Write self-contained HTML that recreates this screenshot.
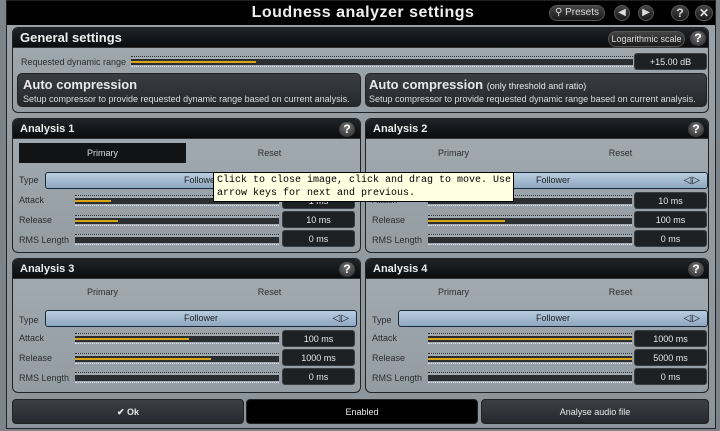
<!DOCTYPE html>
<html><head><meta charset="utf-8"><style>
*{margin:0;padding:0;box-sizing:border-box}
body{width:720px;height:431px;background:#7c8389;position:relative;overflow:hidden;font-family:"Liberation Sans",sans-serif;color:#e8e8e8}
.abs{position:absolute}
.win{left:6px;top:0;width:710px;height:429px;border:1px solid #222;background:linear-gradient(#9aa2a9,#8b949b)}
.title{left:0;top:0;width:708px;height:24px;background:#000;}
.title .t{position:absolute;left:0;width:712px;text-align:center;top:3px;font-size:16px;font-weight:bold;color:#f0f0f0;letter-spacing:.5px}
.pbtn{background:linear-gradient(#444,#1a1a1a);border-radius:9px;border:1px solid #555;color:#ddd;font-size:10px;text-align:center;line-height:14px;height:16px}
.panel{border:1px solid #222;border-radius:6px;background:linear-gradient(#a3abb2,#939ca3);overflow:hidden}
.hdr{left:0;top:0;width:100%;height:20px;background:linear-gradient(#202428,#0a0c0e);border-bottom:1px solid #333}
.hdr span{position:absolute;left:7px;top:4px;font-size:11px;font-weight:bold;color:#eee}
.q{width:16px;height:15px;border-radius:8px;background:radial-gradient(circle at 50% 35%,#777,#222);color:#fff;font-weight:bold;font-size:12px;text-align:center;line-height:15px}
.lbl{font-size:9px;color:#2a2d30}
.tab{font-size:9px;color:#2a2d30;text-align:center;line-height:20px;height:20px}
.track{height:11px;border-top:1px dotted #333;border-bottom:1px dotted #dde;background:linear-gradient(#a3abb2 0 2px,#2a2e31 2px 8px,#a3abb2 8px)}
.fill{position:absolute;left:0;top:4px;height:2px;background:#d9a514}
.val{background:#1e2124;border-radius:3px;color:#e8e8e8;font-size:9px;text-align:center;line-height:17px;height:17px;border:1px solid #3a3e41}
.typebox{height:17px;border:1px solid #1a2a3a;border-radius:3px;background:linear-gradient(#b9cde0,#8ea8c0);color:#222;font-size:9px;text-align:center;line-height:15px}
.arr{position:absolute;right:6px;top:0;font-size:10px;color:#111;letter-spacing:1px}
.btm{height:25px;border-radius:4px;font-size:9px;text-align:center;line-height:25px;border:1px solid #222}
</style></head><body>
<div class="abs win">
 <div class="abs title"><div class="t">Loudness analyzer settings</div>
  <div class="abs pbtn" style="left:542px;top:4px;width:56px">&#9906; Presets</div>
  <div class="abs pbtn" style="left:607px;top:4px;width:16px">&#9664;</div>
  <div class="abs pbtn" style="left:631px;top:4px;width:16px">&#9654;</div>
  <div class="abs pbtn" style="left:664px;top:4px;width:18px;font-weight:bold;font-size:12px">?</div>
  <div class="abs pbtn" style="left:688px;top:4px;width:18px;font-weight:bold;font-size:12px">✕</div>
 </div>
</div>
<div class="abs panel" style="left:12px;top:27px;width:697px;height:86px">
 <div class="abs hdr"><span style="font-size:13px;top:2px">General settings</span></div>
 <div class="abs pbtn" style="left:595px;top:3px;width:77px;font-size:9px">Logarithmic scale</div>
 <div class="abs q" style="left:677px;top:3px">?</div>
 <div class="abs lbl" style="left:8px;top:29px">Requested dynamic range</div>
 <div class="abs track" style="left:118px;top:28px;width:502px"><div class="fill" style="width:125px"></div></div>
 <div class="abs val" style="left:621px;top:25px;width:73px">+15.00 dB</div>
 <div class="abs" style="left:4px;top:45px;width:344px;height:34px;background:linear-gradient(#3a3e42,#25282b);border-radius:5px;border:1px solid #222">
  <div class="abs" style="left:5px;top:3px;font-size:13px;font-weight:bold">Auto compression</div>
  <div class="abs" style="left:5px;top:20px;font-size:9px;color:#ddd">Setup compressor to provide requested dynamic range based on current analysis.</div></div>
 <div class="abs" style="left:352px;top:45px;width:342px;height:34px;background:linear-gradient(#3a3e42,#25282b);border-radius:5px;border:1px solid #222">
  <div class="abs" style="left:3px;top:3px;font-size:13px;font-weight:bold;white-space:nowrap">Auto compression <span style="font-size:9px;font-weight:normal">(only threshold and ratio)</span></div>
  <div class="abs" style="left:3px;top:20px;font-size:9px;color:#ddd">Setup compressor to provide requested dynamic range based on current analysis.</div></div>
</div>

<div class="abs panel" style="left:12px;top:118px;width:349px;height:135px">
 <div class="abs hdr"><span>Analysis 1</span></div><div class="abs q" style="left:326px;top:3px">?</div>
 <div class="abs tab" style="left:6px;top:24px;width:167px;background:#121314;color:#ddd">Primary</div>
 <div class="abs tab" style="left:173px;top:24px;width:167px">Reset</div>
 <div class="abs lbl" style="left:6px;top:56px">Type</div>
 <div class="abs typebox" style="left:32px;top:53px;width:312px">Follower<span class="arr">◁▷</span></div>
 <div class="abs lbl" style="left:6px;top:76px">Attack</div><div class="abs track" style="left:62px;top:76px;width:204px"><div class="fill" style="width:36px"></div></div><div class="abs val" style="left:269px;top:73px;width:73px">1 ms</div>
 <div class="abs lbl" style="left:6px;top:96px">Release</div><div class="abs track" style="left:62px;top:96px;width:204px"><div class="fill" style="width:43px"></div></div><div class="abs val" style="left:269px;top:92px;width:73px">10 ms</div>
 <div class="abs lbl" style="left:6px;top:116px">RMS Length</div><div class="abs track" style="left:62px;top:115px;width:204px"></div><div class="abs val" style="left:269px;top:111px;width:73px">0 ms</div>
</div>
<div class="abs panel" style="left:365px;top:118px;width:344px;height:135px">
 <div class="abs hdr"><span>Analysis 2</span></div><div class="abs q" style="left:322px;top:3px">?</div>
 <div class="abs tab" style="left:4px;top:24px;width:167px">Primary</div>
 <div class="abs tab" style="left:171px;top:24px;width:167px">Reset</div>
 <div class="abs lbl" style="left:6px;top:56px">Type</div>
 <div class="abs typebox" style="left:32px;top:53px;width:310px">Follower<span class="arr">◁▷</span></div>
 <div class="abs lbl" style="left:6px;top:76px">Attack</div><div class="abs track" style="left:62px;top:76px;width:204px"><div class="fill" style="width:60px"></div></div><div class="abs val" style="left:268px;top:73px;width:73px">10 ms</div>
 <div class="abs lbl" style="left:6px;top:96px">Release</div><div class="abs track" style="left:62px;top:96px;width:204px"><div class="fill" style="width:77px"></div></div><div class="abs val" style="left:268px;top:92px;width:73px">100 ms</div>
 <div class="abs lbl" style="left:6px;top:116px">RMS Length</div><div class="abs track" style="left:62px;top:115px;width:204px"></div><div class="abs val" style="left:268px;top:111px;width:73px">0 ms</div>
</div>
<div class="abs panel" style="left:12px;top:258px;width:349px;height:135px">
 <div class="abs hdr"><span>Analysis 3</span></div><div class="abs q" style="left:326px;top:3px">?</div>
 <div class="abs tab" style="left:6px;top:23px;width:167px">Primary</div>
 <div class="abs tab" style="left:173px;top:23px;width:167px">Reset</div>
 <div class="abs lbl" style="left:6px;top:56px">Type</div>
 <div class="abs typebox" style="left:32px;top:51px;width:312px">Follower<span class="arr">◁▷</span></div>
 <div class="abs lbl" style="left:6px;top:74px">Attack</div><div class="abs track" style="left:62px;top:74px;width:204px"><div class="fill" style="width:114px"></div></div><div class="abs val" style="left:269px;top:71px;width:73px">100 ms</div>
 <div class="abs lbl" style="left:6px;top:94px">Release</div><div class="abs track" style="left:62px;top:94px;width:204px"><div class="fill" style="width:136px"></div></div><div class="abs val" style="left:269px;top:90px;width:73px">1000 ms</div>
 <div class="abs lbl" style="left:6px;top:114px">RMS Length</div><div class="abs track" style="left:62px;top:113px;width:204px"></div><div class="abs val" style="left:269px;top:109px;width:73px">0 ms</div>
</div>
<div class="abs panel" style="left:365px;top:258px;width:344px;height:135px">
 <div class="abs hdr"><span>Analysis 4</span></div><div class="abs q" style="left:322px;top:3px">?</div>
 <div class="abs tab" style="left:4px;top:23px;width:167px">Primary</div>
 <div class="abs tab" style="left:171px;top:23px;width:167px">Reset</div>
 <div class="abs lbl" style="left:6px;top:56px">Type</div>
 <div class="abs typebox" style="left:32px;top:51px;width:310px">Follower<span class="arr">◁▷</span></div>
 <div class="abs lbl" style="left:6px;top:74px">Attack</div><div class="abs track" style="left:62px;top:74px;width:204px"><div class="fill" style="width:204px"></div></div><div class="abs val" style="left:268px;top:71px;width:73px">1000 ms</div>
 <div class="abs lbl" style="left:6px;top:94px">Release</div><div class="abs track" style="left:62px;top:94px;width:204px"><div class="fill" style="width:204px"></div></div><div class="abs val" style="left:268px;top:90px;width:73px">5000 ms</div>
 <div class="abs lbl" style="left:6px;top:114px">RMS Length</div><div class="abs track" style="left:62px;top:113px;width:204px"></div><div class="abs val" style="left:268px;top:109px;width:73px">0 ms</div>
</div>

<div class="abs btm" style="left:12px;top:399px;width:232px;background:linear-gradient(#3c4044,#26292c);font-weight:bold">✔ Ok</div>
<div class="abs btm" style="left:246px;top:399px;width:232px;background:#000">Enabled</div>
<div class="abs btm" style="left:481px;top:399px;width:228px;background:linear-gradient(#3c4044,#26292c)">Analyse audio file</div>

<div class="abs" style="left:213px;top:172px;width:301px;height:30px;background:#ffffe1;border:1px solid #000;color:#000;font-family:'Liberation Mono',monospace;font-size:10px;line-height:13px;padding:1px 3px;white-space:nowrap">Click to close image, click and drag to move. Use<br>arrow keys for next and previous.</div>
</body></html>
